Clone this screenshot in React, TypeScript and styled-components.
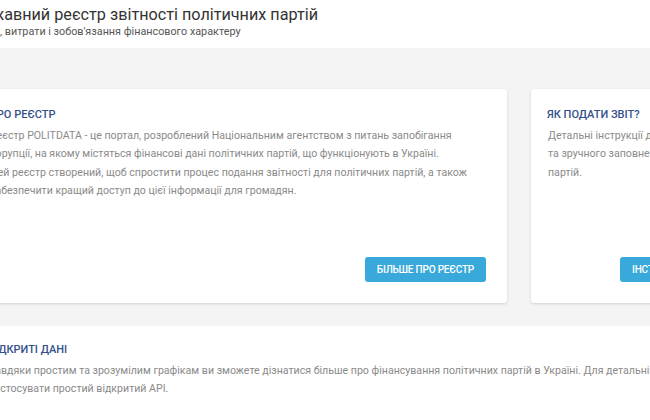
import * as React from 'react';
import styled, { createGlobalStyle } from 'styled-components';

const GlobalStyle = createGlobalStyle`
	html, body {
		margin: 0;
		padding: 0;
		background: #ffffff;
		overflow: hidden;
		font-family: Roboto, "Noto Sans", sans-serif;
	}
`;

const Page = styled.div`
	margin-left: -40px;
	width: 1240px;
`;

const Header = styled.header`
	height: 48px;
	box-sizing: border-box;
	padding: 5px 0 0 0;
	background: #ffffff;
`;

const Title = styled.h1`
	margin: 0 0 0 2px;
	font-size: 16.2px;
	line-height: 20px;
	font-weight: 400;
	color: #333333;
`;

const Subtitle = styled.div`
	margin: 0 0 0 2px;
	font-size: 10.8px;
	line-height: 14px;
	color: #555555;
`;

const Band = styled.section`
	background: #f4f4f4;
	padding: 41px 0 23px 13px;
`;

const Cards = styled.div`
	display: grid;
	grid-template-columns: 534px 534px;
	gap: 24px;
`;

const Card = styled.div`
	height: 214px;
	box-sizing: border-box;
	display: flex;
	flex-direction: column;
	padding: 18px 21px 21px 16px;
	background: #ffffff;
	border-radius: 3px;
	box-shadow: 0 1px 3px rgba(0, 0, 0, 0.14);
`;

const Heading = styled.h2`
	margin: 0 0 4px;
	font-size: 11px;
	line-height: 16px;
	font-weight: 500;
	text-transform: uppercase;
	color: #34508c;
`;

const Text = styled.p`
	margin: 0 0 0 1px;
	font-size: 10.6px;
	line-height: 18.4px;
	color: #8a8a8a;
	white-space: nowrap;
`;

const Actions = styled.div`
	margin-top: auto;
	display: flex;
	justify-content: flex-end;
`;

const Button = styled.button<{ $align?: 'start' | 'end' }>`
	height: 25px;
	padding: 0 12px;
	border: none;
	border-radius: 3px;
	background: #39a9db;
	color: #ffffff;
	font-family: Roboto, sans-serif;
	font-size: 10px;
	font-weight: 500;
	text-transform: uppercase;
	letter-spacing: -0.2px;
	cursor: pointer;
	margin-right: ${p => (p.$align === 'start' ? 'auto' : '0')};
	margin-left: ${p => (p.$align === 'start' ? '73px' : '0')};
`;

const OpenData = styled.section`
	background: #ffffff;
	padding: 16px 0 0 28px;
	height: 94px;
`;

const OpenText = styled(Text)`
	margin-top: 2px;
`;

export default function App() {
	return (
		<>
			<GlobalStyle />
			<Page>
				<Header>
					<Title>Державний реєстр звітності політичних партій</Title>
					<Subtitle>Доходи, витрати і зобов'язання фінансового характеру</Subtitle>
				</Header>
				<Band>
					<Cards>
						<Card>
							<Heading>Про реєстр</Heading>
							<Text>
								Реєстр POLITDATA - це портал, розроблений Національним агентством з питань запобігання
								<br />
								корупції, на якому містяться фінансові дані політичних партій, що функціонують в Україні.
								<br />
								Цей реєстр створений, щоб спростити процес подання звітності для політичних партій, а також
								<br />
								забезпечити кращий доступ до цієї інформації для громадян.
							</Text>
							<Actions>
								<Button>Більше про реєстр</Button>
							</Actions>
						</Card>
						<Card>
							<Heading>Як подати звіт?</Heading>
							<Text>
								Детальні інструкції для правильного
								<br />
								та зручного заповнення звітів політичних
								<br />
								партій.
							</Text>
							<Actions>
								<Button $align="start">Інструкції для партій</Button>
							</Actions>
						</Card>
					</Cards>
				</Band>
				<OpenData>
					<Heading>Відкриті дані</Heading>
					<OpenText>
						Завдяки простим та зрозумілим графікам ви зможете дізнатися більше про фінансування політичних партій в Україні. Для детальнішого аналізу даних ви можете
						<br />
						застосувати простий відкритий API.
					</OpenText>
				</OpenData>
			</Page>
		</>
	);
}
